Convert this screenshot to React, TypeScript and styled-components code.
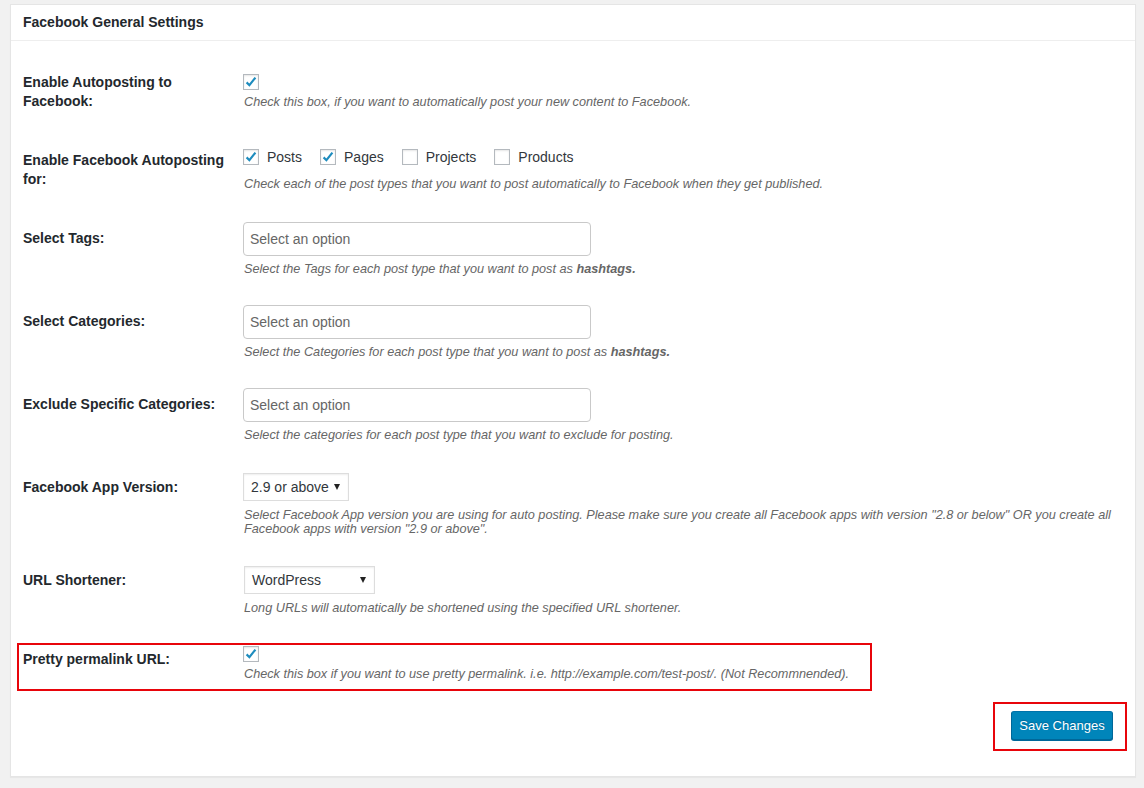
import React from "react";
import styled, { createGlobalStyle } from "styled-components";

const GlobalStyle = createGlobalStyle`
  * { box-sizing: border-box; }
  body {
    margin: 0;
    background: #f1f1f1;
    font-family: "Liberation Sans", Arial, sans-serif;
    color: #23282d;
  }
`;

const Page = styled.div`
  padding: 4px 8px 11px 10px;
`;

const Card = styled.div`
  background: #fff;
  border: 1px solid #e5e5e5;
  box-shadow: 0 1px 1px rgba(0, 0, 0, 0.04);
`;

const Header = styled.h2`
  margin: 0;
  padding: 8px 12px;
  font-size: 14px;
  line-height: 19px;
  font-weight: 700;
  border-bottom: 1px solid #eee;
`;

const Body = styled.div`
  padding: 0 12px;
`;

const Row = styled.div<{ $h: number; $labelTop: number; $fieldTop?: number }>`
  position: relative;
  display: flex;
  align-items: flex-start;
  height: ${(p) => p.$h}px;
  padding-top: ${(p) => p.$fieldTop ?? 19}px;

  & > label {
    margin-top: ${(p) => p.$labelTop - (p.$fieldTop ?? 19)}px;
  }
`;

const Label = styled.label`
  flex: 0 0 220px;
  font-size: 14px;
  line-height: 19px;
  font-weight: 700;
  white-space: nowrap;
`;

const Field = styled.div`
  flex: 1;
  display: flex;
  flex-direction: column;
  align-items: flex-start;
`;

const Desc = styled.p<{ $gap: number }>`
  margin: ${(p) => p.$gap}px 0 0;
  padding-left: 1px;
  font-size: 12.7px;
  line-height: 14px;
  font-style: italic;
  color: #666;
  white-space: nowrap;

  b {
    font-weight: 700;
  }
`;

const Box = styled.span`
  display: inline-flex;
  align-items: center;
  justify-content: center;
  width: 16px;
  height: 16px;
  border: 1px solid #b4b9be;
  background: #fff;
  box-shadow: inset 0 1px 2px rgba(0, 0, 0, 0.1);
  flex: 0 0 16px;
`;

const CheckGroup = styled.div`
  display: flex;
  align-items: center;
  height: 16px;
`;

const CheckItem = styled.span`
  display: inline-flex;
  align-items: center;
  gap: 8px;
  margin-right: 18px;
  font-size: 14px;
  color: #32373c;
`;

const Select2 = styled.div`
  width: 348px;
  height: 34px;
  border: 1px solid #c9c9c9;
  border-radius: 4px;
  padding: 0 6px;
  display: flex;
  align-items: center;
  font-size: 14px;
  color: #666;
`;

const Dropdown = styled.div<{ $w: number; $x?: number }>`
  width: ${(p) => p.$w}px;
  height: 28px;
  margin-left: ${(p) => p.$x ?? 0}px;
  border: 1px solid #ddd;
  box-shadow: inset 0 1px 2px rgba(0, 0, 0, 0.07);
  background: #fff;
  display: flex;
  align-items: center;
  justify-content: space-between;
  padding: 0 8px 0 7px;
  font-size: 14px;
  color: #32373c;
`;

const Caret = styled.span`
  width: 0;
  height: 0;
  border-left: 3px solid transparent;
  border-right: 3px solid transparent;
  border-top: 6px solid #222;
`;

const Highlight = styled.div<{ $l: number; $t: number; $w: number; $h: number }>`
  position: absolute;
  left: ${(p) => p.$l}px;
  top: ${(p) => p.$t}px;
  width: ${(p) => p.$w}px;
  height: ${(p) => p.$h}px;
  border: 2px solid #e8050b;
  pointer-events: none;
`;

const Footer = styled.div`
  display: flex;
  justify-content: flex-end;
  padding: 14px 22px 36px 0;
`;

const ButtonWrap = styled.div`
  position: relative;
`;

const SaveButton = styled.button`
  width: 102px;
  height: 29px;
  padding: 0 0 1px;
  font-family: "Liberation Sans", Arial, sans-serif;
  font-size: 13px;
  color: #fff;
  background: #0085ba;
  border: 1px solid #0073aa;
  border-color: #0073aa #006799 #006799;
  border-radius: 3px;
  box-shadow: 0 1px 0 #006799;
  text-shadow: 0 -1px 1px #006799;
`;

const Check = ({ on }: { on?: boolean }) => (
  <Box>
    {on && (
      <svg width="14" height="14" viewBox="0 0 14 14">
        <path d="M2.6 7.4 L5.4 10.2 L11.4 2.6" fill="none" stroke="#1e8cbe" strokeWidth="2.2" />
      </svg>
    )}
  </Box>
);

export default function App() {
  return (
    <>
      <GlobalStyle />
      <Page>
        <Card>
          <Header>Facebook General Settings</Header>
          <Body>
            <Row $h={89} $fieldTop={33} $labelTop={32}>
              <Label>
                Enable Autoposting to
                <br />
                Facebook:
              </Label>
              <Field>
                <Check on />
                <Desc $gap={5}>Check this box, if you want to automatically post your new content to Facebook.</Desc>
              </Field>
            </Row>

            <Row $h={73} $labelTop={21}>
              <Label>
                Enable Facebook Autoposting
                <br />
                for:
              </Label>
              <Field>
                <CheckGroup>
                  <CheckItem>
                    <Check on /> Posts
                  </CheckItem>
                  <CheckItem>
                    <Check on /> Pages
                  </CheckItem>
                  <CheckItem>
                    <Check /> Projects
                  </CheckItem>
                  <CheckItem>
                    <Check /> Products
                  </CheckItem>
                </CheckGroup>
                <Desc $gap={12}>
                  Check each of the post types that you want to post automatically to Facebook when they get published.
                </Desc>
              </Field>
            </Row>

            <Row $h={83} $labelTop={26}>
              <Label>Select Tags:</Label>
              <Field>
                <Select2>Select an option</Select2>
                <Desc $gap={6}>
                  Select the Tags for each post type that you want to post as <b>hashtags.</b>
                </Desc>
              </Field>
            </Row>

            <Row $h={83} $labelTop={26}>
              <Label>Select Categories:</Label>
              <Field>
                <Select2>Select an option</Select2>
                <Desc $gap={6}>
                  Select the Categories for each post type that you want to post as <b>hashtags.</b>
                </Desc>
              </Field>
            </Row>

            <Row $h={85} $labelTop={26}>
              <Label>Exclude Specific Categories:</Label>
              <Field>
                <Select2>Select an option</Select2>
                <Desc $gap={6}>Select the categories for each post type that you want to exclude for posting.</Desc>
              </Field>
            </Row>

            <Row $h={93} $labelTop={24}>
              <Label>Facebook App Version:</Label>
              <Field>
                <Dropdown $w={106}>
                  2.9 or above <Caret />
                </Dropdown>
                <Desc $gap={7}>
                  Select Facebook App version you are using for auto posting. Please make sure you create all Facebook apps
                  with version "2.8 or below" OR you create all
                  <br />
                  Facebook apps with version "2.9 or above".
                </Desc>
              </Field>
            </Row>

            <Row $h={80} $labelTop={24}>
              <Label>URL Shortener:</Label>
              <Field>
                <Dropdown $w={131} $x={1}>
                  WordPress <Caret />
                </Dropdown>
                <Desc $gap={7}>Long URLs will automatically be shortened using the specified URL shortener.</Desc>
              </Field>
            </Row>

            <Row $h={70} $labelTop={23}>
              <Label>Pretty permalink URL:</Label>
              <Field>
                <Check on />
                <Desc $gap={5}>
                  Check this box if you want to use pretty permalink. i.e. http://example.com/test-post/. (Not Recommnended).
                </Desc>
              </Field>
              <Highlight $l={-6} $t={16} $w={855} $h={48} />
            </Row>
          </Body>
          <Footer>
            <ButtonWrap>
              <SaveButton>Save Changes</SaveButton>
              <Highlight $l={-18} $t={-9} $w={134} $h={49} />
            </ButtonWrap>
          </Footer>
        </Card>
      </Page>
    </>
  );
}
